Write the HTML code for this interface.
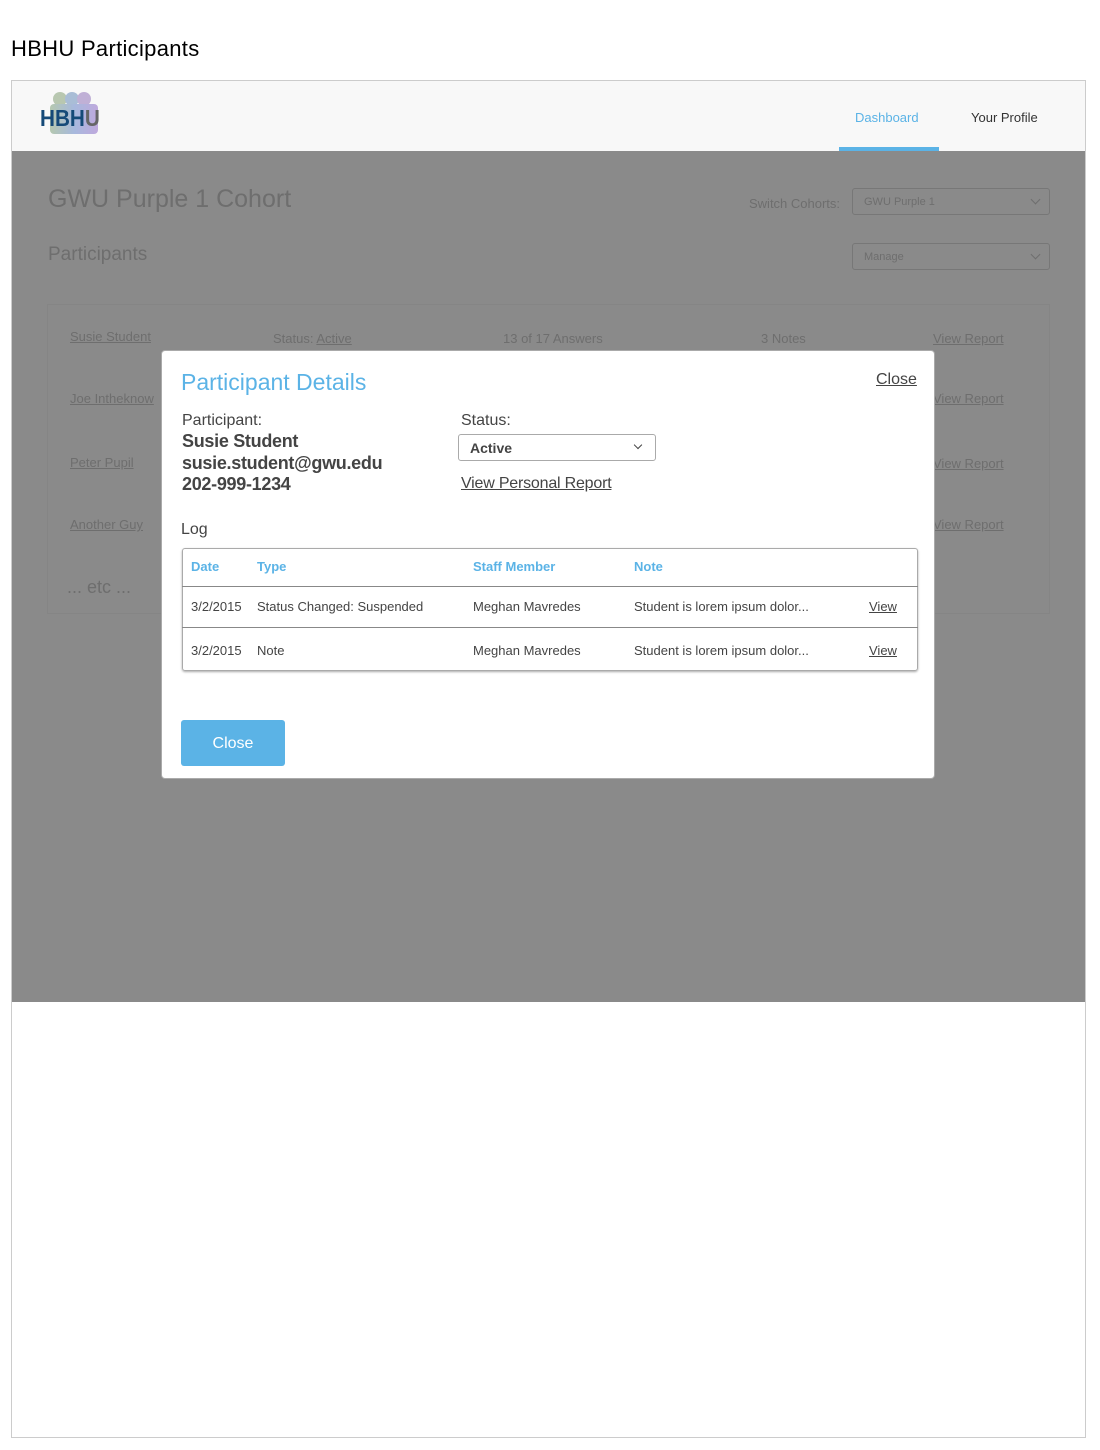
<!DOCTYPE html>
<html><head><style>
*{box-sizing:border-box;margin:0;padding:0}
body{width:1100px;height:1450px;background:#fff;font-family:"Liberation Sans",sans-serif;position:relative;overflow:hidden;color:#444}
.a{position:absolute;white-space:nowrap}
.dim{color:#6e6e6e}
u{text-decoration:underline}
.sel{position:absolute;border:1px solid #777;border-radius:3px;font-size:11px;color:#6e6e6e;padding:7px 11px}
.chev{position:absolute;right:10px;top:8px;width:7px;height:7px;border-right:1.5px solid currentColor;border-bottom:1.5px solid currentColor;transform:rotate(45deg)}
</style></head><body>
<div class="a" style="left:11px;top:36px;font-size:22px;color:#000;letter-spacing:0.3px">HBHU Participants</div>
<div class="a" style="left:11px;top:80px;width:1075px;height:1358px;border:1px solid #ccc"></div>
<div class="a" style="left:12px;top:81px;width:1073px;height:70px;background:#f8f8f8"></div>
<div class="a" style="left:53px;top:92px;width:14px;height:14px;border-radius:50%;background:#b8c7b0"></div>
<div class="a" style="left:65px;top:92px;width:14px;height:14px;border-radius:50%;background:#a9bdd6"></div>
<div class="a" style="left:77px;top:92px;width:14px;height:14px;border-radius:50%;background:#c0b0d6"></div>
<div class="a" style="left:50px;top:104px;width:48px;height:30px;background:linear-gradient(90deg,#b5c8b0,#a7b9dd,#bfa9dd);border-radius:4px"></div>
<div class="a" style="left:40px;top:105px;font-size:23px;font-weight:bold;color:#154a78;transform:scaleX(0.9);transform-origin:left">HBH<span style="color:#666">U</span></div>
<div class="a" style="left:855px;top:110px;font-size:13px;color:#5bb3e6">Dashboard</div>
<div class="a" style="left:839px;top:147px;width:100px;height:4px;background:#5bb3e6"></div>
<div class="a" style="left:971px;top:110px;font-size:13px;color:#333">Your Profile</div>
<div class="a" style="left:12px;top:151px;width:1073px;height:851px;background:#8a8a8a"></div>
<div class="a dim" style="left:48px;top:185px;font-size:25px">GWU Purple 1 Cohort</div>
<div class="a dim" style="left:48px;top:244px;font-size:19px">Participants</div>
<div class="a dim" style="left:749px;top:196px;font-size:13px">Switch Cohorts:</div>
<div class="sel" style="left:852px;top:188px;width:198px;height:27px">GWU Purple 1<span class="chev" style="top:7px"></span></div>
<div class="sel" style="left:852px;top:243px;width:198px;height:27px">Manage<span class="chev" style="top:7px"></span></div>
<div class="a" style="left:47px;top:304px;width:1003px;height:310px;border:1px solid #858585"></div>
<div class="a dim" style="left:70px;top:329px;font-size:13px"><u>Susie Student</u></div>
<div class="a dim" style="left:273px;top:331px;font-size:13px">Status: <u>Active</u></div>
<div class="a dim" style="left:503px;top:331px;font-size:13px">13 of 17 Answers</div>
<div class="a dim" style="left:761px;top:331px;font-size:13px">3 Notes</div>
<div class="a dim" style="left:933px;top:331px;font-size:13px"><u>View Report</u></div>
<div class="a dim" style="left:70px;top:391px;font-size:13px"><u>Joe Intheknow</u></div>
<div class="a dim" style="left:933px;top:391px;font-size:13px"><u>View Report</u></div>
<div class="a dim" style="left:70px;top:455px;font-size:13px"><u>Peter Pupil</u></div>
<div class="a dim" style="left:933px;top:456px;font-size:13px"><u>View Report</u></div>
<div class="a dim" style="left:70px;top:517px;font-size:13px"><u>Another Guy</u></div>
<div class="a dim" style="left:933px;top:517px;font-size:13px"><u>View Report</u></div>
<div class="a dim" style="left:67px;top:577px;font-size:18px">... etc ...</div>
<div class="a" style="left:161px;top:350px;width:774px;height:429px;background:#fff;border:1px solid #aaa;border-radius:4px"></div>
<div class="a" style="left:181px;top:369px;font-size:23px;color:#5bb3e6">Participant Details</div>
<div class="a" style="left:876px;top:371px;font-size:16px;color:#444"><u>Close</u></div>
<div class="a" style="left:182px;top:412px;font-size:16px">Participant:</div>
<div class="a" style="left:182px;top:431px;font-size:18px;font-weight:bold;line-height:21.5px;letter-spacing:-0.3px">Susie Student<br>susie.student@gwu.edu<br>202-999-1234</div>
<div class="a" style="left:461px;top:412px;font-size:16px">Status:</div>
<div class="a" style="left:458px;top:434px;width:198px;height:27px;border:1px solid #aaa;border-radius:3px;font-size:14px;font-weight:bold;padding:5px 11px;color:#444">Active<span class="chev" style="right:14px;top:7px;width:6px;height:6px"></span></div>
<div class="a" style="left:461px;top:475px;font-size:16px;letter-spacing:-0.2px"><u>View Personal Report</u></div>
<div class="a" style="left:181px;top:521px;font-size:16px">Log</div>
<div class="a" style="left:182px;top:548px;width:736px;height:123px;border:1px solid #aaa;border-radius:3px;box-shadow:0 1px 2px #aaa"></div>
<div class="a" style="left:182px;top:586px;width:736px;height:1px;background:#888"></div>
<div class="a" style="left:182px;top:627px;width:736px;height:1px;background:#888"></div>
<div class="a" style="left:191px;top:559px;font-size:13px;font-weight:bold;color:#5bb3e6">Date</div>
<div class="a" style="left:257px;top:559px;font-size:13px;font-weight:bold;color:#5bb3e6">Type</div>
<div class="a" style="left:473px;top:559px;font-size:13px;font-weight:bold;color:#5bb3e6">Staff Member</div>
<div class="a" style="left:634px;top:559px;font-size:13px;font-weight:bold;color:#5bb3e6">Note</div>
<div class="a" style="left:191px;top:599px;font-size:13px">3/2/2015</div>
<div class="a" style="left:257px;top:599px;font-size:13px">Status Changed: Suspended</div>
<div class="a" style="left:473px;top:599px;font-size:13px">Meghan Mavredes</div>
<div class="a" style="left:634px;top:599px;font-size:13px">Student is lorem ipsum dolor...</div>
<div class="a" style="left:869px;top:599px;font-size:13px"><u>View</u></div>
<div class="a" style="left:191px;top:643px;font-size:13px">3/2/2015</div>
<div class="a" style="left:257px;top:643px;font-size:13px">Note</div>
<div class="a" style="left:473px;top:643px;font-size:13px">Meghan Mavredes</div>
<div class="a" style="left:634px;top:643px;font-size:13px">Student is lorem ipsum dolor...</div>
<div class="a" style="left:869px;top:643px;font-size:13px"><u>View</u></div>
<div class="a" style="left:181px;top:720px;width:104px;height:46px;background:#5bb3e6;border-radius:3px;color:#fff;font-size:16px;text-align:center;line-height:48px">Close</div>
</body></html>
